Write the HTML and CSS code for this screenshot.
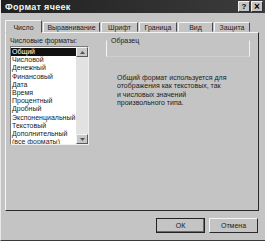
FILE: index.html
```html
<!DOCTYPE html>
<html lang="ru">
<head>
  <meta charset="UTF-8">
  <title>Формат ячеек</title>
  <link rel="stylesheet" href="styles.css">
</head>
<body>
  <div class="window">
    <!-- Title bar -->
    <div class="titlebar">
      <span class="title">Формат ячеек</span>
      <span class="tbtn">?</span>
      <span class="tbtn close">&times;</span>
    </div>

    <!-- Tabs -->
    <div class="tabs">
      <span class="tab active" style="width:37px">Число</span>
      <span class="tab" style="width:57px">Выравнивание</span>
      <span class="tab" style="width:37px">Шрифт</span>
      <span class="tab" style="width:38px">Граница</span>
      <span class="tab" style="width:35px">Вид</span>
      <span class="tab" style="width:36px">Защита</span>
    </div>

    <!-- Tab page -->
    <div class="panel">
      <div class="left">
        <div class="label">Числовые форматы:</div>
        <div class="listbox">
          <ul class="items">
            <li class="sel">Общий</li>
            <li>Числовой</li>
            <li>Денежный</li>
            <li>Финансовый</li>
            <li>Дата</li>
            <li>Время</li>
            <li>Процентный</li>
            <li>Дробный</li>
            <li>Экспоненциальный</li>
            <li>Текстовый</li>
            <li>Дополнительный</li>
            <li>(все форматы)</li>
          </ul>
          <div class="scroll">
            <div class="sbtn"><svg width="5" height="3"><polygon points="0,3 5,3 2.5,0" fill="#555"/></svg></div>
            <div class="track"></div>
            <div class="sbtn"><svg width="5" height="3"><polygon points="0,0 5,0 2.5,3" fill="#555"/></svg></div>
          </div>
        </div>
      </div>
      <div class="right">
        <div class="sample">
          <span class="legend">Образец</span>
        </div>
        <p class="desc">Общий формат используется для<br>отображения как текстовых, так<br>и числовых значений<br>произвольного типа.</p>
      </div>
    </div>

    <!-- Buttons -->
    <div class="buttons">
      <span class="btn default">ОК</span>
      <span class="btn">Отмена</span>
    </div>
  </div>
</body>
</html>
```

FILE: styles.css
```css
body {
  margin: 0;
  background: #c4c4c4;
}
.window {
  width: 265px;
  height: 241px;
  box-sizing: border-box;
  background: #c4c4c4;
  border-left: 1px solid #e8e8e8;
  border-bottom: 1px solid #3a3a3a;
  font-family: "Liberation Sans", Arial, sans-serif;
  font-size: 7px;
  color: #222;
  display: flex;
  flex-direction: column;
}
/* title bar */
.titlebar {
  height: 13px;
  background: linear-gradient(90deg, #202020, #3c3c3c);
  display: flex;
  align-items: center;
  padding: 0 2px 0 4px;
  gap: 1px;
}
.title {
  flex: 1;
  color: #f4f4f4;
  font-weight: bold;
  font-size: 9px;
  letter-spacing: 0.3px;
}
.tbtn {
  width: 10px;
  height: 9px;
  background: #c4c4c4;
  border: 1px solid;
  border-color: #f0f0f0 #303030 #303030 #f0f0f0;
  font-weight: bold;
  font-size: 8px;
  line-height: 9px;
  text-align: center;
  color: #000;
}
.close {
  font-size: 10px;
}
/* tabs */
.tabs {
  display: flex;
  align-items: flex-end;
  height: 13px;
  margin-top: 6px;
  padding-left: 4px;
  position: relative;
  z-index: 1;
}
.tab {
  height: 10px;
  box-sizing: border-box;
  border: 1px solid;
  border-color: #f4f4f4 #4a4a4a transparent #f4f4f4;
  border-radius: 1px 1px 0 0;
  text-align: center;
  line-height: 9px;
  margin-right: 1px;
  background: #c4c4c4;
}
.tab.active {
  height: 13px;
  margin-bottom: -1px;
  line-height: 11px;
  padding-top: 1px;
}
/* panel */
.panel {
  margin-left: 4px;
  width: 254px;
  height: 179px;
  box-sizing: border-box;
  border: 1px solid;
  border-color: #f4f4f4 #2a2a2a #2a2a2a #f4f4f4;
  display: flex;
  padding: 4px 0 0 4px;
}
.left {
  width: 92px;
}
.label {
  height: 9px;
  line-height: 7px;
}
.listbox {
  display: flex;
  width: 79px;
  height: 99px;
  box-sizing: border-box;
  border: 1px solid;
  border-color: #7a7a7a #f0f0f0 #f0f0f0 #7a7a7a;
}
.items {
  list-style: none;
  margin: 0;
  padding: 1px 0 0 0;
  flex: 1;
  background: #fff;
  overflow: hidden;
}
.items li {
  height: 8.2px;
  line-height: 8.2px;
  padding-left: 1px;
  white-space: nowrap;
}
.items li.sel {
  background: #111;
  color: #fff;
}
.scroll {
  width: 12px;
  display: flex;
  flex-direction: column;
  background: #e2e2e2;
}
.sbtn {
  height: 10px;
  box-sizing: border-box;
  background: #c8c8c8;
  border: 1px solid;
  border-color: #f4f4f4 #5a5a5a #5a5a5a #f4f4f4;
  display: flex;
  align-items: center;
  justify-content: center;
}
.track {
  flex: 1;
}
.right {
  padding-left: 4px;
}
.sample {
  width: 144px;
  height: 17px;
  margin-top: 3px;
  box-sizing: border-box;
  border: 1px solid;
  border-color: transparent #f0f0f0 #d0d0d0 #f4f4f4;
  position: relative;
}
.legend {
  position: absolute;
  top: -4px;
  left: 3px;
  background: #c4c4c4;
  padding: 0 1px;
  line-height: 7px;
}
.desc {
  margin: 17px 0 0 11px;
  line-height: 8.3px;
}
/* buttons */
.buttons {
  display: flex;
  justify-content: flex-end;
  gap: 4px;
  margin-top: 7px;
  padding-right: 7px;
}
.btn {
  width: 49px;
  height: 15px;
  box-sizing: border-box;
  border: 1px solid;
  border-color: #f4f4f4 #2a2a2a #2a2a2a #f4f4f4;
  text-align: center;
  line-height: 13px;
}
.btn.default {
  outline: 1px solid #222;
  outline-offset: -1px;
  box-shadow: inset -1px -1px #6a6a6a;
}
```
